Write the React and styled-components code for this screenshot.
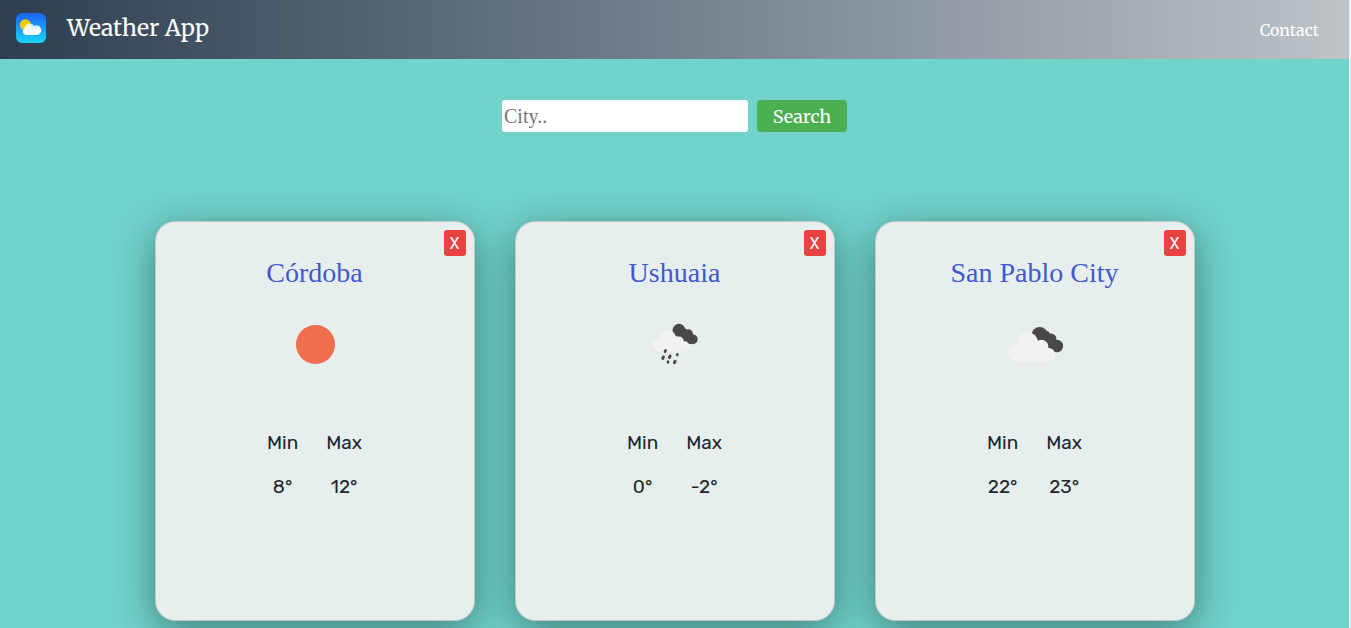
import React, { useState } from "react";
import styled, { createGlobalStyle } from "styled-components";

const slab = `"Merriweather", "DejaVu Serif Condensed", "DejaVu Serif", serif`;
const serif = `"Liberation Serif", "Times New Roman", serif`;
const sans = `"Rubik", Inter, Roboto, sans-serif`;

const GlobalStyle = createGlobalStyle`
  *, *::before, *::after { box-sizing: border-box; }
  html { background: #70d3cc; }
  body { margin: 0; color: #212529; font-family: ${serif}; }
`;

const Page = styled.div`
  min-height: 100vh;
  overflow: hidden;
  border-right: 2px solid #f1f1f1;
  background: #70d3cc;
`;

const Navbar = styled.header`
  display: flex;
  align-items: center;
  justify-content: space-between;
  height: 59px;
  padding: 0 30px 3px 16px;
  background: linear-gradient(to right, #2c3e50, #bdc3c7);
  font-family: ${slab};
`;

const Brand = styled.a`
  display: flex;
  align-items: center;
  gap: 21px;
  color: #fff;
  font-size: 23px;
  line-height: 32px;
  text-decoration: none;
`;

const Logo = styled.svg`
  width: 30px;
  height: 30px;
`;

const NavLink = styled.a`
  padding-top: 4px;
  color: #fff;
  font-size: 16px;
  line-height: 24px;
  text-decoration: none;
`;

const SearchForm = styled.form`
  display: flex;
  justify-content: center;
  gap: 9px;
  margin-top: 41px;
`;

const CityInput = styled.input`
  width: 246px;
  height: 32px;
  padding: 1px 2px;
  border: 0;
  border-radius: 3px;
  background: #fff;
  font-family: ${serif};
  font-size: 20px;
  &::placeholder { color: #757575; opacity: 1; }
`;

const SearchButton = styled.button`
  width: 90px;
  height: 32px;
  padding: 0;
  border: 0;
  border-radius: 4px;
  background: #4caf50;
  color: #fff;
  font-family: ${slab};
  font-size: 18px;
  cursor: pointer;
`;

const Cards = styled.main`
  display: flex;
  flex-wrap: wrap;
  justify-content: center;
  gap: 40px;
  padding: 89px 20px 7px;
`;

const CardBox = styled.article`
  display: flex;
  flex-direction: column;
  align-items: center;
  width: 320px;
  min-height: 400px;
  padding: 8px;
  border: 1px solid #bfc8c7;
  border-radius: 20px;
  background: #e6efed;
  box-shadow: 0 10px 40px rgba(0, 0, 0, 0.4);
`;

const CloseButton = styled.button`
  align-self: flex-end;
  width: 22px;
  height: 26px;
  padding: 0;
  border: 0;
  border-radius: 3px;
  background: #e84242;
  color: #fff;
  font-family: Roboto, sans-serif;
  font-size: 16px;
  cursor: pointer;
`;

const CityName = styled.h2`
  margin: 0;
  color: #4357d0;
  font-size: 28px;
  font-weight: 400;
  line-height: 34px;
`;

const WeatherIcon = styled.svg`
  width: 80px;
  height: 80px;
  margin-top: 14px;
`;

const Temperatures = styled.dl`
  display: flex;
  gap: 28px;
  margin: 47px 0 0;
  font-family: ${sans};
  font-size: 19px;
  font-weight: 400;
  line-height: 24px;
  text-align: center;
`;

const Reading = styled.div`
  display: flex;
  flex-direction: column;
  gap: 20px;
`;

const Label = styled.dt`
  margin: 0;
`;

const Value = styled.dd`
  margin: 0;
`;

function AppLogo() {
  return (
    <Logo viewBox="0 0 30 30" aria-hidden="true">
      <defs>
        <linearGradient id="sky" x1="0" y1="0" x2="0" y2="1">
          <stop offset="0" stopColor="#1d62f0" />
          <stop offset="1" stopColor="#1ad5fd" />
        </linearGradient>
        <linearGradient id="cloud" x1="0" y1="0" x2="0" y2="1">
          <stop offset="0" stopColor="#fff" stopOpacity="0.75" />
          <stop offset="0.7" stopColor="#fff" stopOpacity="0.97" />
        </linearGradient>
      </defs>
      <rect width="30" height="30" rx="6" fill="url(#sky)" />
      <circle cx="9.4" cy="11.8" r="5.5" fill="#ffc90a" />
      <path d="M10.3 22A3.6 3.6 0 0 1 8.5 15.3A5.3 5.3 0 0 1 18.2 13A4.8 4.8 0 1 1 20.6 22z" fill="url(#cloud)" />
    </Logo>
  );
}

function ConditionIcon({ kind }) {
  if (kind === "clear") {
    return (
      <WeatherIcon viewBox="0 0 80 80" role="img" aria-label="Clear">
        <circle cx="40.5" cy="40.5" r="19.5" fill="#ee6e4e" />
      </WeatherIcon>
    );
  }
  if (kind === "rain") {
    return (
      <WeatherIcon viewBox="0 0 80 80" role="img" aria-label="Rain">
        <g fill="#484849">
          <circle cx="44" cy="26.2" r="6.4" />
          <circle cx="53.3" cy="30" r="4.7" />
          <circle cx="57.8" cy="35.3" r="4.9" />
          <path d="M38 27l12-3 8 9-2 7-8 0z" />
        </g>
        <g fill="#f2f2f1">
          <circle cx="24.5" cy="40.7" r="6.6" />
          <circle cx="32.7" cy="34" r="8" />
          <circle cx="43.8" cy="37.5" r="5.1" />
          <circle cx="49.5" cy="42.3" r="5" />
          <path d="M24.5 47.3h25v-8L32 30l-9 8z" />
        </g>
        <g stroke="#484849" strokeLinecap="round">
          <path d="M28.4 53l-.6 1.4M35.1 52l-.7 1.4M40.1 57.3l-.7 1.4" strokeWidth="3" />
          <path d="M30.7 46.3l-.7 1.4M42.4 50.4l-.2.6M33.1 57.7l-.2.6" strokeWidth="2.6" />
        </g>
      </WeatherIcon>
    );
  }
  return (
    <WeatherIcon viewBox="0 0 80 80" role="img" aria-label="Cloudy">
      <g fill="#484849">
        <circle cx="44.7" cy="31" r="8" />
        <circle cx="55.8" cy="35" r="5.6" />
        <circle cx="61.8" cy="42" r="6.3" />
        <path d="M37 31l16-4 9 12-2 9-10 1z" />
      </g>
      <g fill="#f2f2f1">
        <circle cx="21.7" cy="48.8" r="8.9" />
        <circle cx="32.7" cy="38.5" r="10.3" />
        <circle cx="46.5" cy="42.7" r="6.9" />
        <circle cx="53.6" cy="50.9" r="6.8" />
        <path d="M21.7 57.7h32V46L34 34l-15 8z" />
      </g>
    </WeatherIcon>
  );
}

function Card({ name, kind, min, max, onClose }) {
  return (
    <CardBox>
      <CloseButton type="button" aria-label={`X, remove ${name}`} onClick={onClose}>X</CloseButton>
      <CityName>{name}</CityName>
      <ConditionIcon kind={kind} />
      <Temperatures>
        <Reading>
          <Label>Min</Label>
          <Value>{min}°</Value>
        </Reading>
        <Reading>
          <Label>Max</Label>
          <Value>{max}°</Value>
        </Reading>
      </Temperatures>
    </CardBox>
  );
}

const initialCities = [
  { name: "Córdoba", kind: "clear", min: 8, max: 12 },
  { name: "Ushuaia", kind: "rain", min: 0, max: -2 },
  { name: "San Pablo City", kind: "clouds", min: 22, max: 23 },
];

export default function App() {
  const [cities, setCities] = useState(initialCities);
  return (
    <Page>
      <GlobalStyle />
      <Navbar>
        <Brand href="#home"><AppLogo />Weather App</Brand>
        <NavLink href="#contact">Contact</NavLink>
      </Navbar>
      <SearchForm onSubmit={(e) => e.preventDefault()}>
        <CityInput type="text" placeholder="City.." aria-label="City" />
        <SearchButton type="submit">Search</SearchButton>
      </SearchForm>
      <Cards>
        {cities.map((city) => (
          <Card
            key={city.name}
            {...city}
            onClose={() => setCities(cities.filter((c) => c.name !== city.name))}
          />
        ))}
      </Cards>
    </Page>
  );
}
